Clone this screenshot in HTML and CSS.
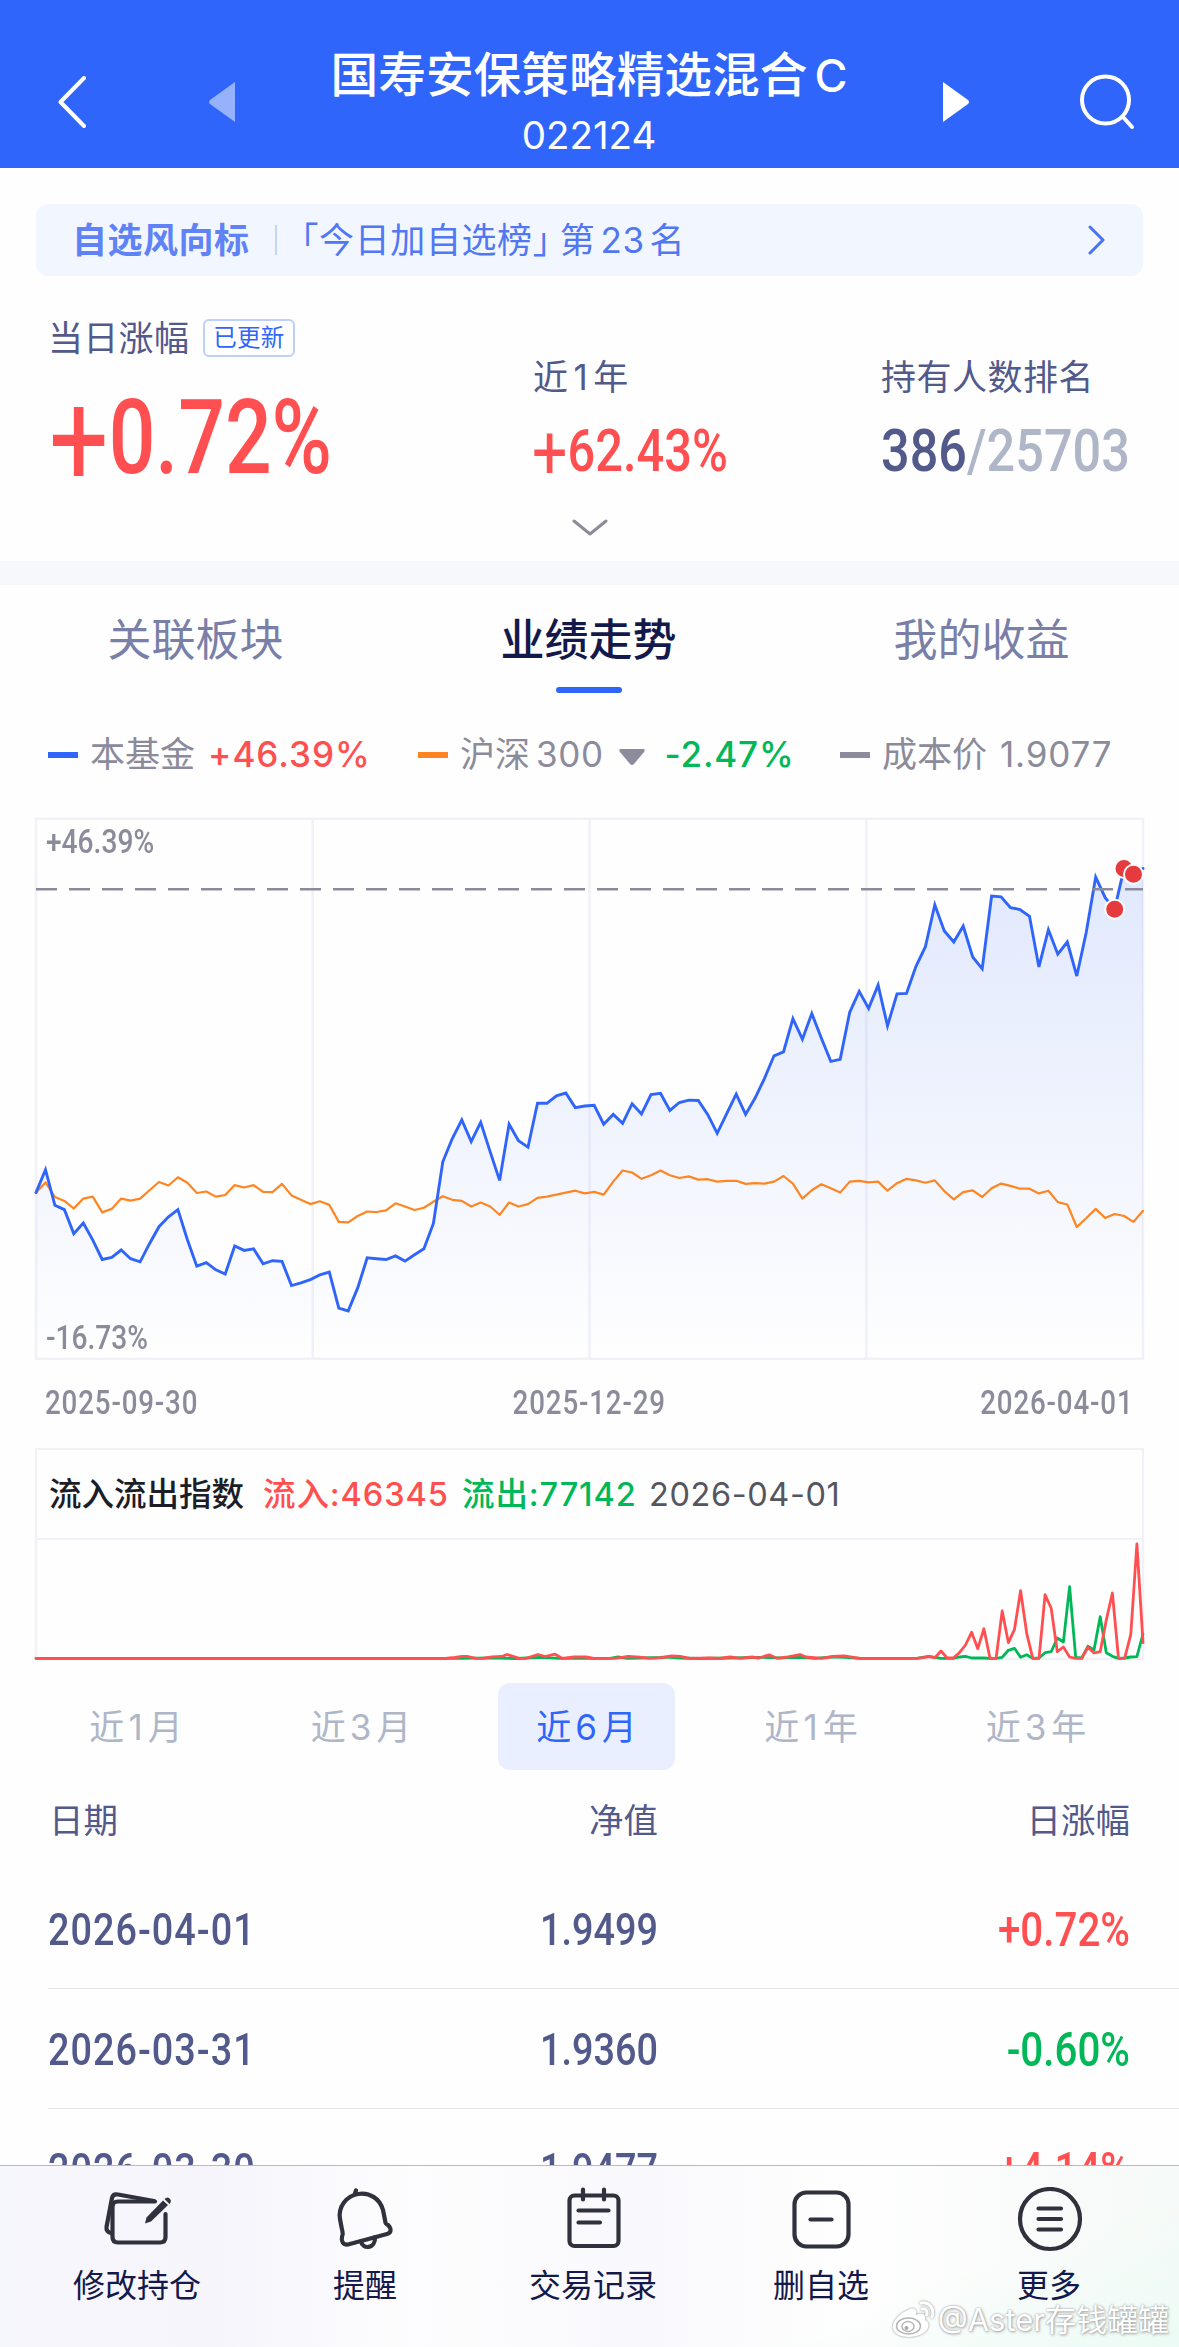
FILE: index.html
```html
<!DOCTYPE html>
<html lang="zh-CN">
<head>
    <meta charset="UTF-8">
    <meta name="viewport" content="width=device-width, initial-scale=1.0">
    <title>国寿安保策略精选混合C</title>
    <link rel="stylesheet" href="styles.css">
</head>
<body>
    <!-- 顶部导航 -->
    <header class="header">
        <svg class="icon-back" width="28" height="54" viewBox="0 0 28 54"><path d="M26 3L2.500 27L26 51"/></svg>
        <svg class="icon-prev" width="27" height="40" viewBox="0 0 27 40"><path d="M27 0V40L2 22Q0 20 2 18Z"/></svg>
        <div class="header-title">
            <h1>国寿安保策略精选混合<span class="share">C</span></h1>
            <p>022124</p>
        </div>
        <svg class="icon-next" width="27" height="40" viewBox="0 0 27 40"><path d="M0 0V40L25 22Q27 20 25 18Z"/></svg>
        <svg class="icon-search" width="56" height="56" viewBox="0 0 56 56"><circle cx="25.500" cy="26" r="23.500"/><path d="M43 43L52 53"/></svg>
    </header>

    <!-- 自选风向标 -->
    <div class="banner">
        <b>自选风向标</b>
        <i class="banner-line"></i>
        <span class="banner-text">「今日加自选榜<span class="quote">」</span>第<span class="digit">23</span>名</span>
        <svg width="18" height="30" viewBox="0 0 18 30"><path d="M2 2L15 15L2 28"/></svg>
    </div>

    <!-- 涨幅概览 -->
    <section class="summary">
        <div class="stat stat-day">
            <div class="stat-label">当日涨幅<span class="badge">已更新</span></div>
            <div class="din big red"><span class="sign">+</span>0.72%</div>
        </div>
        <div class="stat stat-year">
            <div class="stat-label">近<span class="digit">1</span>年</div>
            <div class="din mid red"><span class="sign">+</span>62.43%</div>
        </div>
        <div class="stat stat-rank">
            <div class="stat-label">持有人数排名</div>
            <div class="din mid rank">386<span>/25703</span></div>
        </div>
    </section>
    <div class="expand">
        <svg width="36" height="18" viewBox="0 0 36 18"><path d="M2 2L18 15L34 2"/></svg>
    </div>
    <div class="divider"></div>

    <nav class="tabs">
        <a>关联板块</a>
        <a class="active">业绩走势</a>
        <a>我的收益</a>
    </nav>

    <!-- 图例 -->
    <div class="legend">
        <div class="legend-item"><i class="dash blue"></i>本基金<span class="value red">+46.39%</span></div>
        <div class="legend-item"><i class="dash orange"></i>沪深<span class="index">300</span><svg width="26" height="16" viewBox="0 0 26 16"><path d="M2 0H24Q27 0 25 3L15 15Q13 17 11 15L1 3Q-1 0 2 0Z"/></svg><span class="value green">-2.47%</span></div>
        <div class="legend-item"><i class="dash gray"></i>成本价<span class="value cost">1.9077</span></div>
    </div>

    <!-- 业绩走势图 -->
    <div class="chart">
        <svg width="1179" height="548" viewBox="0 812 1179 548">
            <defs>
                <linearGradient id="fundFill" x1="0" y1="868" x2="0" y2="1358" gradientUnits="userSpaceOnUse">
                    <stop offset="0" stop-color="#3065fb" stop-opacity="0.14"/>
                    <stop offset="1" stop-color="#3065fb" stop-opacity="0"/>
                </linearGradient>
            </defs>
            <path class="grid" d="M36 818.700H1143V1358.700H36ZM312.700 818.700V1358.700M589.500 818.700V1358.700M866.300 818.700V1358.700"/>
            <polygon id="fundArea" fill="url(#fundFill)"/>
            <polyline id="indexLine" class="line-index"/>
            <polyline id="fundLine" class="line-fund"/>
            <path class="cost-line" d="M36 889.300H1143"/>
            <g class="trade">
                <circle cx="1114.700" cy="909.200" r="9.500"/>
                <circle cx="1124" cy="868.400" r="9.500"/>
                <circle cx="1133.500" cy="874.300" r="9.500"/>
            </g>
        </svg>
        <span class="din axis axis-top">+46.39%</span>
        <span class="din axis axis-bottom">-16.73%</span>
    </div>
    <div class="dates">
        <span class="din axis">2025-09-30</span>
        <span class="din axis">2025-12-29</span>
        <span class="din axis">2026-04-01</span>
    </div>

    <!-- 流入流出指数 -->
    <div class="flow">
        <div class="flow-head">
            <span class="flow-name">流入流出指数</span>
            <span class="flow-in">流入:46345</span>
            <span class="flow-out">流出:77142</span>
            <span class="flow-date">2026-04-01</span>
        </div>
        <svg width="1111" height="122" viewBox="34 1540 1111 122">
            <path class="grid" d="M36 1540V1659H1143V1540"/>
            <polyline id="outLine" class="line-out"/>
            <polyline id="inLine" class="line-in"/>
        </svg>
    </div>

    <div class="ranges">
        <a>近<span>1</span>月</a>
        <a>近<span>3</span>月</a>
        <a class="active">近<span>6</span>月</a>
        <a>近<span>1</span>年</a>
        <a>近<span>3</span>年</a>
    </div>

    <!-- 净值列表 -->
    <div class="table">
        <div class="row row-head"><span>日期</span><span>净值</span><span>日涨幅</span></div>
        <div class="row"><span class="din">2026-04-01</span><span class="din">1.9499</span><span class="din red">+0.72%</span></div>
        <div class="row"><span class="din">2026-03-31</span><span class="din">1.9360</span><span class="din green">-0.60%</span></div>
        <div class="row"><span class="din">2026-03-30</span><span class="din">1.9477</span><span class="din red">+4.14%</span></div>
    </div>

    <!-- 底部操作栏 -->
    <footer class="footer">
        <a>
            <svg width="68" height="68" viewBox="0 0 68 68">
                <path d="M52 14.500H15Q9.500 14.500 9.500 20V50Q9.500 55.500 15 55.500H57Q62.500 55.500 62.500 50V27"/>
                <path d="M51 14L15 7.500Q10 6.500 9 11L3.500 40Q3 45 8 46"/>
                <path class="solid" d="M60 13.500L65 18L48 34.500L42 36.500L43.500 30.500Z"/>
                <path class="solid" d="M61.500 12Q65 9 67 12Q69 14 66.500 17Z"/>
            </svg>
            修改持仓
        </a>
        <a>
            <svg width="68" height="68" viewBox="0 0 68 68">
                <path d="M11 50C13 46 11 44 10.500 40L9 32C7 20 15 9 27 7C39 5 49 12 52 23L54 33C54.500 37 55 37 57 38C61 42 60 46 56 47L17 57.500C12 58 10 54 11 50Z"/>
                <path d="M24 6L25 3.500M30 54C31 63 45 62 44 50"/>
            </svg>
            提醒
        </a>
        <a>
            <svg width="68" height="68" viewBox="0 0 68 68">
                <rect x="10.500" y="8.500" width="49" height="50.500" rx="5"/>
                <path d="M24 2.500V12.500M45 2.500V12.500M19.500 23.500H49.500M19.500 35.500H41"/>
            </svg>
            交易记录
        </a>
        <a>
            <svg width="68" height="68" viewBox="0 0 68 68">
                <rect x="7.500" y="5.500" width="54" height="54" rx="12"/>
                <path d="M23.500 32.500H44.500"/>
            </svg>
            删自选
        </a>
        <a>
            <svg width="68" height="68" viewBox="0 0 68 68">
                <circle cx="35" cy="32" r="30"/>
                <path d="M23.500 21.500H46M23.500 32H46M23.500 42.500H46"/>
            </svg>
            更多
        </a>
        <div class="watermark">
            <svg width="44" height="40" viewBox="0 0 44 40">
                <path class="wb-face" d="M17 10C22 7 27 9 25 15C31 12 36 15 34 20C39 22 39 30 31 34C21 39 5 38 2 29C0 22 9 13 17 10Z"/>
                <ellipse class="wb-ring" cx="17.500" cy="26" rx="12" ry="8"/>
                <ellipse class="wb-ring" cx="17" cy="26.500" rx="6" ry="5"/>
                <circle class="wb-eye" cx="15.500" cy="28" r="2"/>
                <path class="wb-wave" d="M30 3C38 1 44 9 41 17M31 9C35 8 37 12 35.500 15"/>
            </svg>
            <span>@Aster存钱罐罐</span>
        </div>
    </footer>

    <script>
        // 每个交易日的纵坐标
        const fund = [993,935,1025,1036,1097,1070,1113,1162,1157,1138,1160,1168,1122,1079,1054,1036,1112,1179,1170,1188,
            1199,1128,1139,1135,1173,1165,1167,1228,1221,1213,1201,1194,1285,1292,1234,1158,1160,1162,1153,1166,
            1150,1135,1071,915,856,809,864,815,890,962,820,862,878,767,767,748,741,778,774,772,
            820,795,818,768,794,745,742,785,765,759,760,796,843,793,744,795,754,704,647,637,
            553,605,540,602,661,656,537,484,527,468,571,490,489,421,371,265,331,359,319,397,
            427,243,245,272,277,294,422,328,390,359,445,335,195,247,276,173,188,173];
        const index = [993,967,1004,1014,1033,1008,1003,1043,1034,1008,1013,1008,987,966,975,954,968,994,990,1003,
            999,974,980,974,991,992,971,1000,1011,1022,1015,1024,1067,1068,1052,1041,1042,1038,1020,1028,
            1037,1031,1016,1002,1011,1014,1028,1018,1028,1049,1018,1028,1022,1006,1003,998,993,988,995,991,
            998,965,937,942,958,949,937,949,956,952,960,959,965,963,963,971,969,970,965,951,
            970,1008,987,972,982,993,965,963,967,965,988,969,958,962,968,962,989,1010,992,987,
            1004,982,970,976,983,983,995,988,1017,1023,1080,1058,1034,1057,1047,1052,1067,1039];

        // 流入 / 流出：从右往左第 n 天
        const inflow = [368,72,343,415,415,219,300,395,399,382,415,415,411,381,395,265,224,415,415,340,212,328,368,273,
            415,415,326,386,337,375,398,414,414,393,413,410,413,415];
        const outflow = [342,410,411,414,415,409,398,290,390,379,414,412,200,366,354,395,398,414,415,404,412,385,391,412,
            415,415,414,414,414,409,411,415,415,415,412,409,412,415];
        const inEarly = '36,1658.3 445,1658.3 455,1657.5 462,1656.5 468,1656.5 476,1658.3 483,1658.3 492,1656.8 502,1656.5 507,1654.5 519,1658.3 526,1658.3 538,1654.5 545,1656.5 555,1654.2 562,1658.3 574,1657 586,1657 594,1658.3 615,1658.3 628,1656.5 640,1657.2 650,1658.3 662,1657.7 672,1656 680,1656.3 690,1658.3 710,1658 720,1658.5 730,1657 740,1658.3 752,1657 759,1658 769,1654.8 777,1658.3 788,1656.8 800,1654.5 806,1657 822,1658.3 833,1656.5 844,1655.8 860,1658.3';
        const outEarly = '36,1658.3 440,1658.3 460,1658.3 490,1657.8 515,1658.5 540,1657.3 560,1658.4 610,1658.3 618,1657 627,1658.3 660,1657.5 668,1657 680,1658 700,1658.5 730,1658 760,1657.3 780,1657.8 800,1657.3 815,1658.3 832,1656.8 845,1657.3 860,1658.3';

        function trend(data) {
            return data.map((v, i) => (36 + i * 1107 / 117).toFixed(1) + ',' + (800 + v / 2.529).toFixed(1)).join(' ');
        }

        function flow(early, data) {
            const late = data.map((v, i) => (1143 - i * 6.12).toFixed(1) + ',' + (1520 + v / 3).toFixed(1)).reverse();
            return early + ' ' + late.join(' ');
        }

        document.getElementById('fundLine').setAttribute('points', trend(fund));
        document.getElementById('indexLine').setAttribute('points', trend(index));
        document.getElementById('fundArea').setAttribute('points', '36,1358 ' + trend(fund) + ' 1143,1358');
        document.getElementById('inLine').setAttribute('points', flow(inEarly, inflow));
        document.getElementById('outLine').setAttribute('points', flow(outEarly, outflow));
    </script>
</body>
</html>
```
FILE: styles.css
```css
* {
    box-sizing: border-box;
    margin: 0;
    padding: 0;
}

body {
    width: 1179px;
    height: 2347px;
    overflow: hidden;
    display: flex;
    flex-direction: column;
    background: #fefefe;
    color: #52598b;
    font-family: Inter, "Noto Sans CJK SC", sans-serif;
    font-size: 35px;
}

body > * {
    flex: none;
}

svg {
    display: block;
    flex: none;
    fill: none;
    stroke-linecap: round;
    stroke-linejoin: round;
}

.red { color: #ff4f50; }
.green { color: #00b857; }

/* 窄体数字 */
.din {
    display: inline-block;
    font-family: Roboto, "Noto Sans CJK SC", sans-serif;
    font-weight: 500;
    white-space: nowrap;
    transform: scaleX(0.84);
    transform-origin: left center;
}

/* 顶部导航 */
.header {
    display: grid;
    grid-template-columns: 150px 27px 1fr 137px 56px;
    align-items: center;
    height: 168px;
    padding: 36px 43px 0 58px;
    background: #3065fb;
    color: #fff;
    text-align: center;
}

.header h1 {
    font-size: 47.7px;
    font-weight: 500;
    line-height: 68px;
}

.header .share {
    margin-left: 7px;
    font-size: 45px;
}

.header p {
    padding-bottom: 3px;
    font-size: 38.5px;
    line-height: 50px;
}

.icon-back, .icon-search {
    stroke: #fff;
    stroke-width: 4;
}

.icon-prev { fill: #97b2fd; }
.icon-next { fill: #fff; }

/* 自选风向标 */
.banner {
    display: flex;
    align-items: center;
    height: 72px;
    margin: 36px 36px 0;
    padding: 0 37px 0 36px;
    border-radius: 12px;
    background: #f1f6ff;
    color: #5277f3;
    line-height: 74px;
}

.banner b {
    color: #5f83f6;
    letter-spacing: 0.5px;
}

.banner-line {
    width: 2px;
    height: 30px;
    margin: 0 7px 0 25px;
    background: #c5d4fb;
}

.banner-text { flex: 1; letter-spacing: 0.6px; }

.banner-text .quote {
    margin-right: 9px;
    font-feature-settings: "halt";
}

.banner-text .digit { margin: 0 5px; }
.banner svg { stroke: #4a73f3; stroke-width: 3; }

/* 涨幅概览 */
.summary {
    display: grid;
    grid-template-columns: 482px 348px 1fr;
    height: 224px;
    padding-left: 51px;
}

.stat-day { padding-top: 36px; }
.stat-year, .stat-rank { padding-top: 75px; }

.stat-label {
    display: flex;
    align-items: center;
    height: 52px;
    line-height: 52px;
    letter-spacing: 0.5px;
}

.stat-day .stat-label { margin-left: -3px; letter-spacing: 0.3px; }
.stat-label .digit { margin: 0 5px; }

.badge {
    height: 38px;
    margin-left: 14px;
    padding: 0 8px;
    border: 2px solid #bdcffd;
    border-radius: 6px;
    color: #3065fb;
    font-size: 23.5px;
    line-height: 33px;
}

.big {
    font-size: 104px;
    line-height: 120px;
    margin-top: 14px;
    margin-left: -2px;
    transform: scaleX(0.79);
}

.mid {
    font-size: 60px;
    line-height: 70px;
    margin-top: 13px;
}

.sign {
    font-size: 1.28em;
    font-weight: 400;
    line-height: 0;
    vertical-align: -0.1em;
}

.stat-year .mid {
    margin-left: -1px;
    transform: scaleX(0.813);
}

.rank span { color: #aeb6c8; }

.expand {
    display: flex;
    justify-content: center;
    height: 61px;
    padding-top: 19px;
}

.expand svg { stroke: #8b8b9b; stroke-width: 3; }

.divider {
    height: 24px;
    background: #f7f8fc;
}

.tabs {
    display: grid;
    grid-template-columns: repeat(3, 1fr);
    height: 108px;
    padding-top: 22px;
    color: #7a7fa8;
    font-size: 44px;
    line-height: 66px;
    text-align: center;
}

.tabs a { margin-left: -2px; }

.tabs .active {
    color: #14194b;
    font-weight: 500;
}

.tabs .active::after {
    content: "";
    display: block;
    width: 66px;
    height: 6px;
    margin: 14px auto 0;
    border-radius: 3px;
    background: #3065fb;
}

/* 图例 */
.legend {
    display: grid;
    grid-template-columns: 370px 422px 1fr;
    height: 119px;
    padding: 34px 0 0 48px;
    color: #8b8b9b;
}

.legend-item {
    display: flex;
    align-items: center;
    height: 54px;
    line-height: 54px;
    white-space: nowrap;
}

.dash {
    width: 30px;
    height: 6px;
    margin-top: 2px;
    margin-right: 12px;
}

.blue { background: #3065fb; }
.orange { background: #ff8522; }
.gray { background: #8b8b9b; }

.legend .value {
    margin-left: 13px;
    font-weight: 500;
    letter-spacing: 1px;
}

.legend .cost { margin-left: 13px; font-weight: 400; letter-spacing: 0.8px; }
.legend .index { margin-left: 6px; letter-spacing: 0.6px; }

.legend svg {
    margin-left: 15px;
    margin-top: 6px;
    fill: #8b8b9b;
}

.legend svg + .value { margin-left: 20px; letter-spacing: 0.8px; }

/* 走势图 */
.chart {
    position: relative;
    height: 548px;
}

.grid {
    stroke: #f1f1f8;
    stroke-width: 2.5;
}

.line-fund {
    stroke: #3065fb;
    stroke-width: 2.9;
    stroke-linejoin: miter;
}

.line-index {
    stroke: #ff8522;
    stroke-width: 2.2;
}

.cost-line {
    stroke: #8b8b9b;
    stroke-width: 2.6;
    stroke-dasharray: 21 12;
    stroke-linecap: butt;
}

.trade circle {
    fill: #e53b3e;
    stroke: #fff;
    stroke-width: 2;
}

.axis {
    color: #8b8b9b;
    font-size: 33.5px;
    line-height: 40px;
}

.axis-top {
    position: absolute;
    left: 46px;
    top: 10px;
}

.axis-bottom {
    position: absolute;
    left: 46px;
    bottom: 2px;
}

.dates {
    display: flex;
    justify-content: space-between;
    height: 88px;
    padding: 23px 46px 0 45px;
}

.dates .axis {
    height: 40px;
    font-size: 33px;
    letter-spacing: 1px;
}

.dates .axis:nth-child(2) { transform-origin: center; }
.dates .axis:nth-child(3) { transform-origin: right; }

/* 流入流出 */
.flow {
    width: 1111px;
    height: 214px;
    margin-left: 34px;
}

.flow-head {
    display: flex;
    height: 92px;
    margin-right: 1px;
    margin-left: 1px;
    padding-left: 12px;
    border: 2px solid #f1f1f8;
    font-size: 32.5px;
    line-height: 89px;
    white-space: nowrap;
}

.flow-name { width: 214px; color: #1c1d26; font-weight: 500; }

.flow-in {
    width: 199px;
    color: #ff4f50;
    font-weight: 500;
    letter-spacing: 0.9px;
}

.flow-out {
    width: 187px;
    color: #00b857;
    font-weight: 500;
    letter-spacing: 0.9px;
}

.flow-date { color: #55565f; letter-spacing: 0.6px; }

.line-in, .line-out {
    stroke: #ff4f50;
    stroke-width: 2.8;
}

.line-out { stroke: #00b857; }

.ranges {
    display: grid;
    grid-template-columns: repeat(5, 177px);
    gap: 48px;
    height: 109px;
    margin: 21px 0 0 48px;
    color: #aeb6c8;
    line-height: 88px;
    text-align: center;
}

.ranges a { height: 87px; }
.ranges span { margin: 0 5px 0 4px; }
.ranges a:not(.active) { margin-left: -1px; }

.ranges .active {
    border-radius: 12px;
    background: #e9effe;
    color: #3065fb;
}

/* 净值列表 */
.table {
    height: 373px;
    overflow: hidden;
    padding-left: 48px;
}

.row {
    display: grid;
    grid-template-columns: 330px 280px 1fr;
    align-items: center;
    height: 120px;
    padding-right: 49px;
    border-bottom: 1px solid #e6e6ea;
    font-size: 45px;
}

.row-head {
    height: 77px;
    padding-bottom: 20px;
    padding-left: 1px;
    border: none;
    font-size: 34.5px;
    line-height: 40px;
    grid-template-columns: 329px 280px 1fr;
}

.row .din { padding-top: 2px; }

.row span:not(:first-child) {
    text-align: right;
    transform-origin: right center;
}

.row .din:first-child { letter-spacing: 1.2px; }
.row .din:last-child { font-size: 48px; }

/* 底部操作栏 */
.footer {
    position: relative;
    display: grid;
    grid-template-columns: repeat(5, 228px);
    height: 182px;
    margin-top: auto;
    padding: 21px 0 0 23px;
    border-top: 1px solid #b9b9be;
    background: linear-gradient(160deg, rgba(255, 255, 255, 0) 75%, rgba(232, 252, 244, 0.7)), linear-gradient(90deg, #f6f7fc 0%, #f6f5fc 18%, #fdfdfe 35%, #f9f9fd 54%, #fefefe 72%, #f9fbfa 90%, #f6faf8 100%);
    color: #14194b;
    font-size: 32px;
    line-height: 46px;
    text-align: center;
}

.footer a svg {
    margin: 0 auto 8px;
    stroke: #2f313c;
    stroke-width: 4.2;
}

.footer .solid { fill: #2f313c; stroke: none; }

.watermark {
    position: absolute;
    right: 10px;
    bottom: 4px;
    display: flex;
    align-items: center;
    gap: 3px;
    color: #fff;
    font-size: 31px;
    text-shadow: 0 0 2px #999, 1px 1px 3px #aaa;
    white-space: nowrap;
}

.watermark svg { filter: drop-shadow(0 0 1px #888); }
.wb-face { fill: #fff; }
.wb-ring { stroke: #b5b5b5; stroke-width: 1.5; }
.wb-eye { fill: #aaa; }
.wb-wave { stroke: #fff; stroke-width: 3; }
```
